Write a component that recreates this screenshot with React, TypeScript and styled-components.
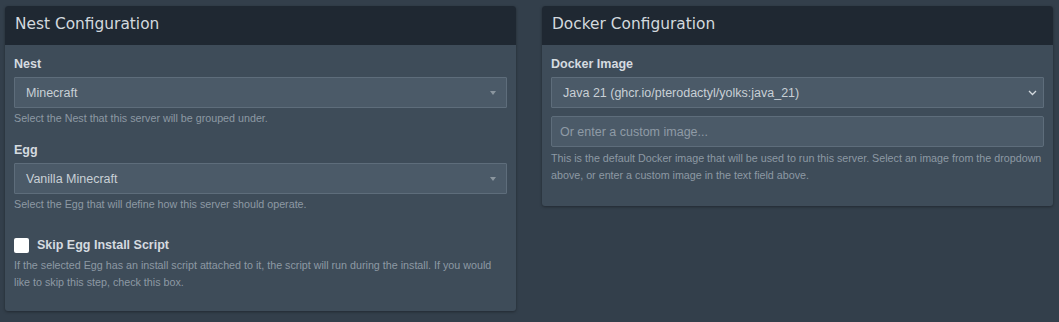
import React from "react";
import styled, { createGlobalStyle } from "styled-components";

const GlobalStyle = createGlobalStyle`
  html, body { margin: 0; padding: 0; background: #333f4b; }
  body { font-family: "Liberation Sans", Arial, sans-serif; }
  * { box-sizing: border-box; }
`;

const Page = styled.div`
  display: grid;
  grid-template-columns: 511px 511px;
  column-gap: 26px;
  align-items: start;
  padding: 6px 6px 0 5px;
  height: 322px;
`;

const Panel = styled.section`
  background: #3e4c59;
  border-radius: 3px;
  box-shadow: 0 1px 3px rgba(0, 0, 0, 0.35);
  overflow: hidden;
`;

const PanelHeader = styled.header`
  background: #1f2832;
  padding: 8px 10px 10px 10px;
  height: 39px;
`;

const PanelTitle = styled.h3`
  margin: 0;
  font-family: "DejaVu Sans", sans-serif;
  font-weight: 400;
  font-size: 15.4px;
  line-height: 21px;
  color: #d3d9de;
`;

const PanelBody = styled.div<{ $bottom: number }>`
  padding: 10px 9px ${(p) => p.$bottom}px 9px;
  display: flex;
  flex-direction: column;
`;

const FormGroup = styled.div<{ $gap?: number }>`
  display: flex;
  flex-direction: column;
  margin-top: ${(p) => p.$gap ?? 0}px;
`;

const Label = styled.label`
  display: block;
  font-weight: 700;
  font-size: 12.5px;
  line-height: 18px;
  color: #d5dbe0;
  margin-bottom: 4px;
`;

const SelectBox = styled.div`
  position: relative;
  height: 31px;
  background: #4b5a68;
  border: 1px solid #5e6d7b;
  border-radius: 1px;
  display: flex;
  align-items: center;
  padding: 0 30px 0 11px;
  font-size: 12.5px;
  color: #c9d0d6;
`;

const Caret = styled.span`
  position: absolute;
  right: 10px;
  top: 13px;
  width: 0;
  height: 0;
  border-style: solid;
  border-width: 4px 3px 0 3px;
  border-color: #8b969f transparent transparent transparent;
`;

const Chevron = styled.svg`
  position: absolute;
  right: 6px;
  top: 12px;
`;

const TextInput = styled.input`
  margin-top: 8px;
  height: 31px;
  background: #4b5a68;
  border: 1px solid #5e6d7b;
  border-radius: 2px;
  padding: 0 8px;
  font-family: "Liberation Sans", Arial, sans-serif;
  font-size: 12.5px;
  color: #ccd3d9;
  outline: none;
  &::placeholder { color: #8f9ba6; }
`;

const Help = styled.p<{ $top?: number }>`
  margin: ${(p) => p.$top ?? 2}px 0 0 0;
  font-size: 10.72px;
  line-height: 17px;
  color: #8d99a4;
`;

const CheckRow = styled.label`
  display: flex;
  align-items: center;
  gap: 8px;
  height: 18px;
  font-weight: 700;
  font-size: 12.5px;
  color: #d5dbe0;
`;

const CheckBox = styled.span`
  width: 15px;
  height: 15px;
  background: #ffffff;
  border-radius: 2px;
  flex: none;
`;

export default function App() {
  return (
    <>
      <GlobalStyle />
      <Page>
        <Panel>
          <PanelHeader>
            <PanelTitle>Nest Configuration</PanelTitle>
          </PanelHeader>
          <PanelBody $bottom={20}>
            <FormGroup>
              <Label>Nest</Label>
              <SelectBox>
                Minecraft
                <Caret />
              </SelectBox>
              <Help>Select the Nest that this server will be grouped under.</Help>
            </FormGroup>
            <FormGroup $gap={14}>
              <Label>Egg</Label>
              <SelectBox>
                Vanilla Minecraft
                <Caret />
              </SelectBox>
              <Help>Select the Egg that will define how this server should operate.</Help>
            </FormGroup>
            <FormGroup $gap={23}>
              <CheckRow>
                <CheckBox />
                Skip Egg Install Script
              </CheckRow>
              <Help $top={3}>
                If the selected Egg has an install script attached to it, the script will run during the install. If you would
                like to skip this step, check this box.
              </Help>
            </FormGroup>
          </PanelBody>
        </Panel>
        <Panel>
          <PanelHeader>
            <PanelTitle>Docker Configuration</PanelTitle>
          </PanelHeader>
          <PanelBody $bottom={22}>
            <FormGroup>
              <Label>Docker Image</Label>
              <SelectBox>
                Java 21 (ghcr.io/pterodactyl/yolks:java_21)
                <Chevron width="9" height="6" viewBox="0 0 9 6">
                  <polyline points="1,1 4.5,4.5 8,1" fill="none" stroke="#d3d9de" strokeWidth="1.3" />
                </Chevron>
              </SelectBox>
              <TextInput placeholder="Or enter a custom image..." />
              <Help $top={3}>
                This is the default Docker image that will be used to run this server. Select an image from the dropdown
                above, or enter a custom image in the text field above.
              </Help>
            </FormGroup>
          </PanelBody>
        </Panel>
      </Page>
    </>
  );
}
